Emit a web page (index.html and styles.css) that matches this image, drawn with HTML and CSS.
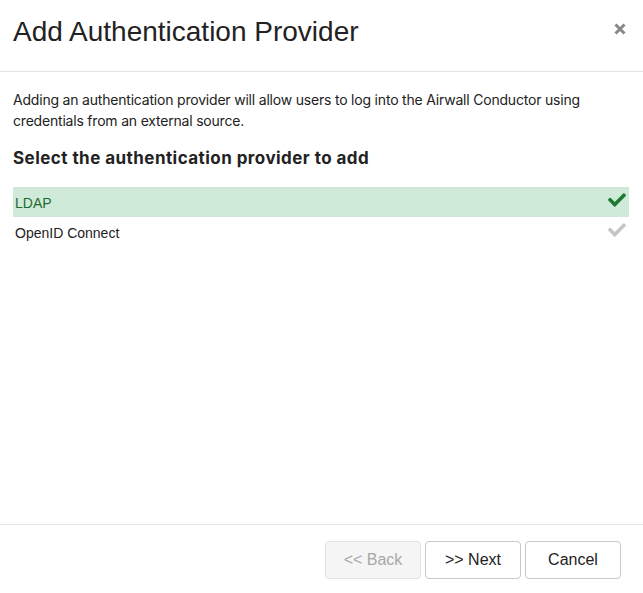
FILE: index.html
```html
<!DOCTYPE html>
<html>
<head>
<meta charset="utf-8">
<link rel="stylesheet" href="styles.css">
</head>
<body>
<div class="modal">
  <div class="modal-header">
    <h1 class="modal-title">Add Authentication Provider</h1>
    <button class="close" aria-label="Close">
      <svg width="12" height="12" viewBox="0 0 12 12"><path d="M1.5 1.5 L10.5 10.5 M10.5 1.5 L1.5 10.5" stroke="#888" stroke-width="3" stroke-linecap="butt"/></svg>
    </button>
  </div>
  <div class="modal-body">
    <p class="desc">Adding an authentication provider will allow users to log into the Airwall Conductor using credentials from an external source.</p>
    <h2 class="section-title">Select the authentication provider to add</h2>
    <ul class="provider-list">
      <li class="provider selected"><span>LDAP</span>
        <svg class="check" viewBox="0 0 512 512"><path d="M173.898 439.404l-166.4-166.4c-9.997-9.997-9.997-26.206 0-36.204l36.203-36.204c9.997-9.998 26.207-9.998 36.204 0L192 312.69 432.095 72.596c9.997-9.997 26.207-9.997 36.204 0l36.203 36.204c9.997 9.997 9.997 26.206 0 36.204l-294.4 294.401c-9.998 9.997-26.207 9.997-36.204-.001z"/></svg>
      </li>
      <li class="provider"><span>OpenID Connect</span>
        <svg class="check" viewBox="0 0 512 512"><path d="M173.898 439.404l-166.4-166.4c-9.997-9.997-9.997-26.206 0-36.204l36.203-36.204c9.997-9.998 26.207-9.998 36.204 0L192 312.69 432.095 72.596c9.997-9.997 26.207-9.997 36.204 0l36.203 36.204c9.997 9.997 9.997 26.206 0 36.204l-294.4 294.401c-9.998 9.997-26.207 9.997-36.204-.001z"/></svg>
      </li>
    </ul>
  </div>
  <div class="modal-footer">
    <button class="btn disabled">&lt;&lt; Back</button>
    <button class="btn">&gt;&gt; Next</button>
    <button class="btn">Cancel</button>
  </div>
</div>
</body>
</html>
```
FILE: styles.css
```css
* { box-sizing: border-box; }
html, body { margin: 0; padding: 0; background: #fff; }
body {
  font-family: "Liberation Sans", Arial, Helvetica, sans-serif;
  color: #222;
}
.modal {
  width: 643px;
  height: 593px;
  display: flex;
  flex-direction: column;
}
.modal-header {
  height: 72px;
  border-bottom: 1px solid #e3e3e3;
  display: flex;
  align-items: flex-start;
  justify-content: space-between;
  padding: 15px 16px 0 13px;
}
.modal-title {
  margin: 0;
  font-size: 28px;
  font-weight: normal;
  line-height: 34px;
  color: #222;
}
.close {
  border: 0;
  background: none;
  padding: 0;
  margin-top: 7px;
  width: 14px;
  height: 14px;
  display: flex;
  align-items: center;
  justify-content: center;
}
.modal-body {
  flex: 1;
  padding: 17px 14px 0 13px;
}
.desc {
  margin: 0;
  font-family: Inter, "Liberation Sans", sans-serif;
  font-size: 14px;
  letter-spacing: -0.2px;
  line-height: 21px;
  color: #222;
}
.section-title {
  margin: 16px 0 18px;
  font-family: Inter, "Liberation Sans", sans-serif;
  font-size: 17px;
  letter-spacing: 0.45px;
  line-height: 22px;
  font-weight: bold;
  color: #222;
}
.provider-list {
  list-style: none;
  margin: 0;
  padding: 0;
}
.provider {
  height: 30px;
  display: flex;
  align-items: center;
  justify-content: space-between;
  padding: 2px 3px 0 2px;
  font-size: 14px;
  color: #222;
}
.provider .check {
  width: 18px;
  height: 18px;
  fill: #c6c6c6;
  margin-top: -6px;
}
.provider.selected {
  background: #cfead8;
  color: #1f6b33;
}
.provider.selected .check { fill: #1d7a32; }
.modal-footer {
  height: 69px;
  border-top: 1px solid #e3e3e3;
  display: flex;
  justify-content: flex-end;
  align-items: flex-start;
  gap: 4px;
  padding: 16px 22px 0 0;
}
.btn {
  width: 96px;
  height: 38px;
  border: 1px solid #c8c8c8;
  border-radius: 4px;
  background: #fff;
  font-family: "Liberation Sans", Arial, Helvetica, sans-serif;
  font-size: 16px;
  color: #222;
  padding: 0;
}
.btn.disabled {
  background: #f5f5f5;
  border-color: #e2e2e2;
  color: #a8a8a8;
}
```
